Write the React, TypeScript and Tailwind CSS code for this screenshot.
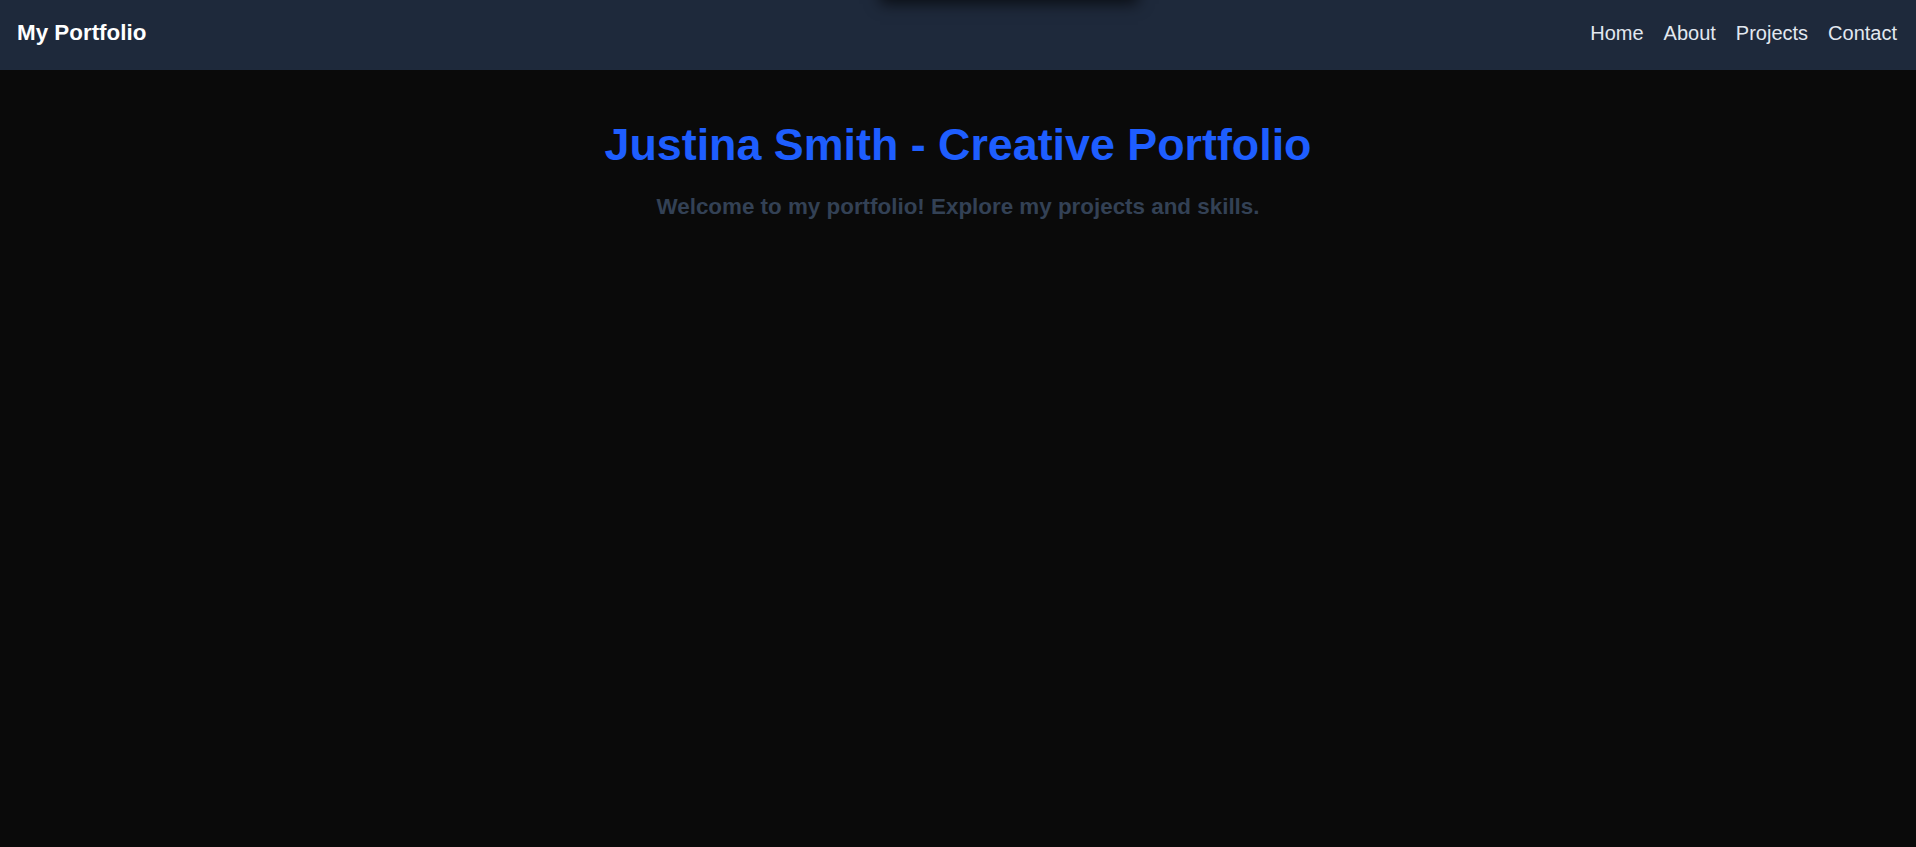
import React from "react";

export default function App() {
  const font = { fontFamily: '"Liberation Sans", Arial, sans-serif' };
  return (
    <div className="min-h-[847px] bg-[#0a0a0a] relative overflow-hidden" style={font}>
      <div className="absolute top-[-60px] left-[880px] w-[258px] h-[60px] bg-[#1e293b] shadow-[0_4px_14px_rgba(0,0,0,0.65)] z-20" />
      <nav className="h-[70px] bg-[#1e293b] flex items-center justify-between pl-[17px] pr-[19px] pb-[5px]">
        <div className="text-[22.4px] font-bold text-white">My Portfolio</div>
        <ul className="flex gap-5 text-[20px] text-[#e2e8f0]">
          <li>Home</li>
          <li>About</li>
          <li>Projects</li>
          <li>Contact</li>
        </ul>
      </nav>
      <main className="pt-[48px] flex flex-col items-center text-center">
        <h1 className="text-[44.8px] leading-[52px] font-bold text-[#1e5eff]">
          Justina Smith - Creative Portfolio
        </h1>
        <p className="mt-[24px] text-[22.4px] leading-[26px] font-bold text-[#334155]">
          Welcome to my portfolio! Explore my projects and skills.
        </p>
      </main>
    </div>
  );
}
